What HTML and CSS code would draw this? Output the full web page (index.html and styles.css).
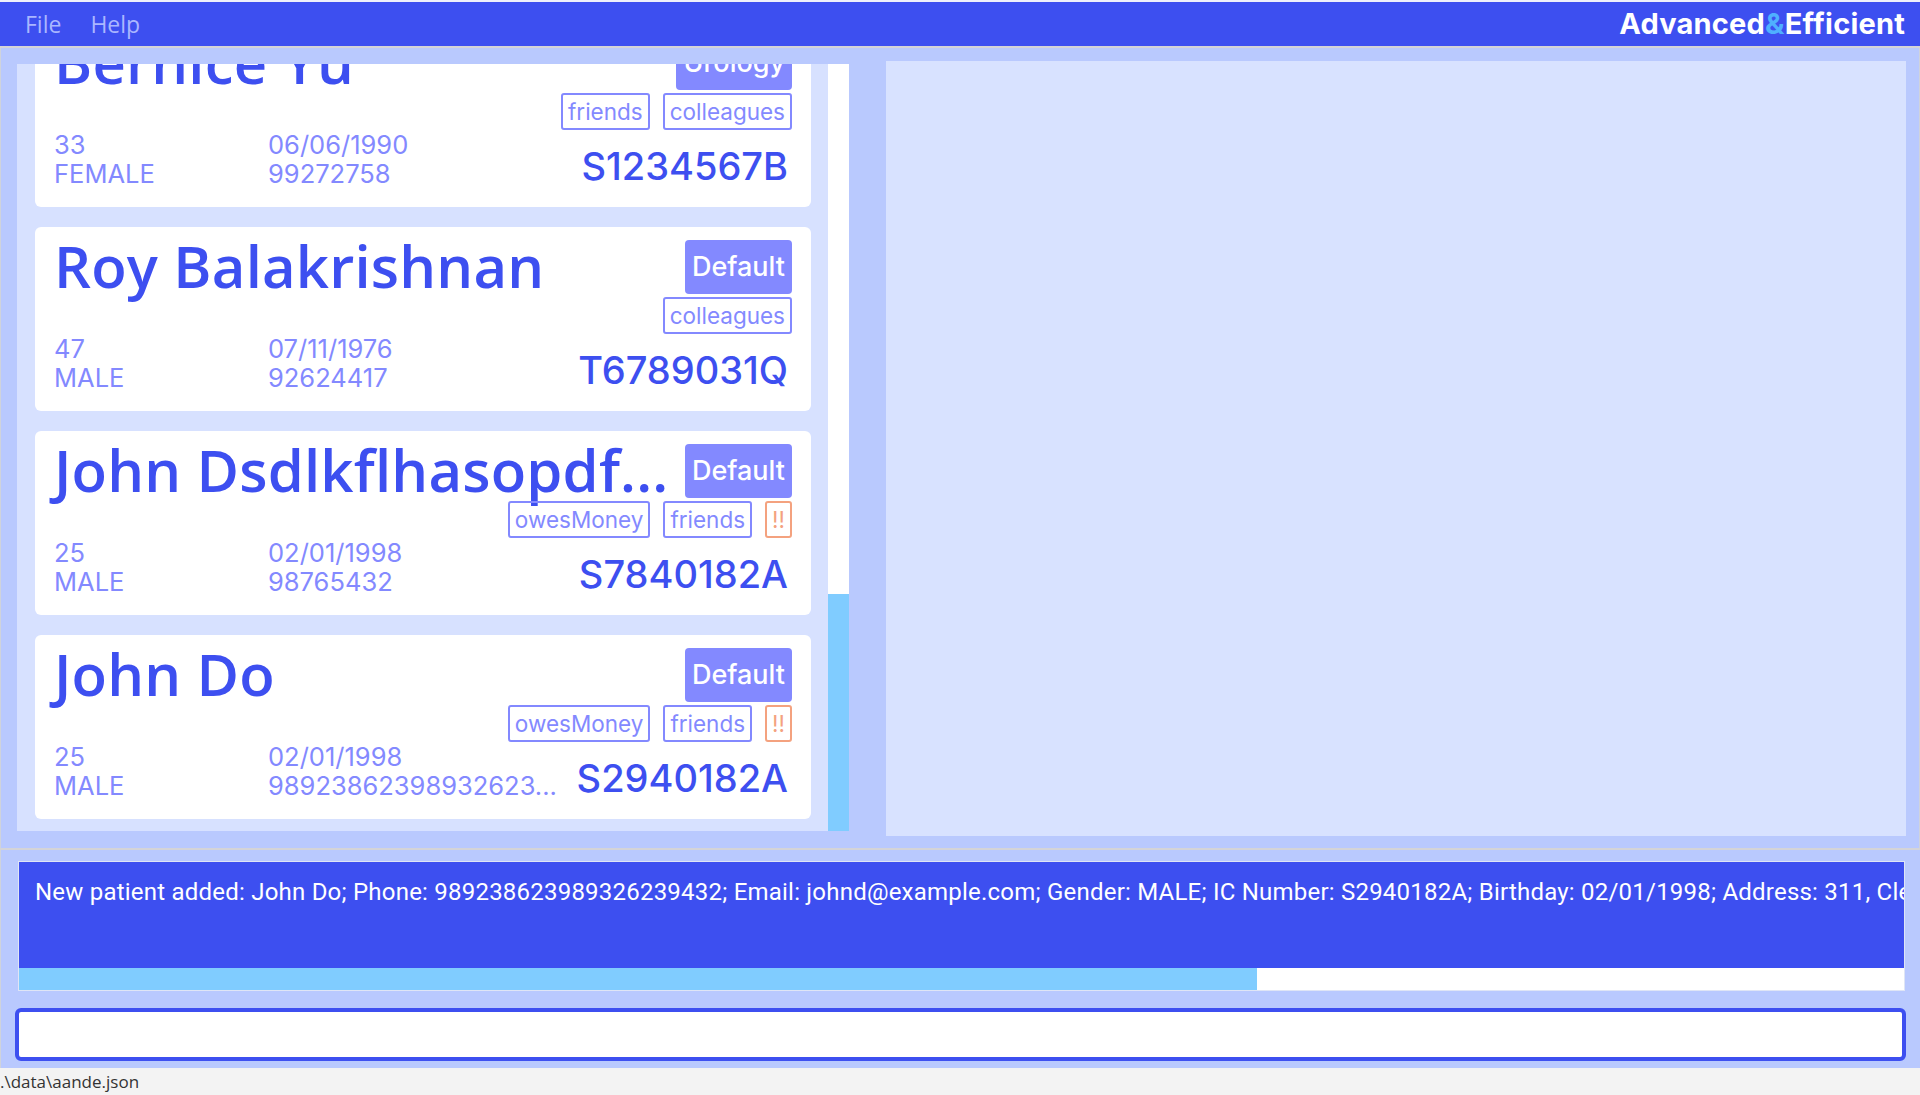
FILE: index.html
```html
<!DOCTYPE html>
<html lang="en">
<head>
<meta charset="utf-8">
<title>Advanced&amp;Efficient</title>
<link rel="stylesheet" href="styles.css">
</head>
<body>
<div class="app">
  <header class="menubar">
    <nav class="menu">
      <span class="menu-item">File</span>
      <span class="menu-item">Help</span>
    </nav>
    <div class="logo">Advanced<span class="amp">&amp;</span>Efficient</div>
  </header>

  <main class="main">
    <section class="list-panel">
      <div class="list-viewport">
        <div class="list-content">
          <div class="cell">
            <article class="card">
              <div class="card-head">
                <h2 class="name">Bernice Yu</h2>
                <span class="badge">Urology</span>
              </div>
              <div class="tags"><span class="tag">friends</span><span class="tag">colleagues</span></div>
              <div class="card-foot">
                <div class="col col-a"><div>33</div><div>FEMALE</div></div>
                <div class="col col-b"><div>06/06/1990</div><div>99272758</div></div>
                <div class="ic">S1234567B</div>
              </div>
            </article>
          </div>
          <div class="cell">
            <article class="card">
              <div class="card-head">
                <h2 class="name">Roy Balakrishnan</h2>
                <span class="badge">Default</span>
              </div>
              <div class="tags"><span class="tag">colleagues</span></div>
              <div class="card-foot">
                <div class="col col-a"><div>47</div><div>MALE</div></div>
                <div class="col col-b"><div>07/11/1976</div><div>92624417</div></div>
                <div class="ic">T6789031Q</div>
              </div>
            </article>
          </div>
          <div class="cell">
            <article class="card">
              <div class="card-head">
                <h2 class="name">John Dsdlkflhasopdf...</h2>
                <span class="badge">Default</span>
              </div>
              <div class="tags"><span class="tag">owesMoney</span><span class="tag">friends</span><span class="tag warn">!!</span></div>
              <div class="card-foot">
                <div class="col col-a"><div>25</div><div>MALE</div></div>
                <div class="col col-b"><div>02/01/1998</div><div>98765432</div></div>
                <div class="ic">S7840182A</div>
              </div>
            </article>
          </div>
          <div class="cell">
            <article class="card">
              <div class="card-head">
                <h2 class="name">John Do</h2>
                <span class="badge">Default</span>
              </div>
              <div class="tags"><span class="tag">owesMoney</span><span class="tag">friends</span><span class="tag warn">!!</span></div>
              <div class="card-foot">
                <div class="col col-a"><div>25</div><div>MALE</div></div>
                <div class="col col-b"><div>02/01/1998</div><div>98923862398932623...</div></div>
                <div class="ic">S2940182A</div>
              </div>
            </article>
          </div>
        </div>
      </div>
      <div class="scrollbar"><div class="thumb"></div></div>
    </section>
    <section class="detail-panel"></section>
  </main>

  <section class="bottom">
    <div class="result">
      <div class="result-text">New patient added: John Do; Phone: 989238623989326239432; Email: johnd@example.com; Gender: MALE; IC Number: S2940182A; Birthday: 02/01/1998; Address: 311, Clementi Ave 2, #02-25; Tags: [owesMoney][friends]</div>
    </div>
    <div class="progress"><div class="progress-fill" style="width:65.7%"></div></div>
    <div class="command"></div>
  </section>

  <footer class="status">.\data\aande.json</footer>
</div>
</body>
</html>
```

FILE: styles.css
```css
* { box-sizing: border-box; }

html, body {
  margin: 0;
  padding: 0;
  width: 1920px;
  height: 1095px;
  overflow: hidden;
  background: #f3f3f3;
  font-family: "Inter", "Noto Sans", sans-serif;
}

.app {
  display: flex;
  flex-direction: column;
  width: 1920px;
  height: 1095px;
}

/* ---------- menu bar ---------- */
.menubar {
  height: 48px;
  border-top: 2px solid #eef0fb;
  border-bottom: 2px solid #d4d4d8;
  background: #3d4ff0;
  display: flex;
  align-items: center;
  justify-content: space-between;
  padding: 0 15px 0 25px;
}

.menu {
  display: flex;
  gap: 29px;
}

.menu-item {
  font-family: "Open Sans", "Noto Sans", sans-serif;
  font-size: 23px;
  line-height: 30px;
  color: #aab6ff;
}

.logo {
  font-family: "Inter", sans-serif;
  font-weight: 700;
  font-size: 29px;
  line-height: 36px;
  letter-spacing: 0.2px;
  color: #ffffff;
}

.amp { color: #4fb0ff; }

/* ---------- main ---------- */
.main {
  height: 802px;
  display: flex;
  gap: 37px;
  background: #b9c9fe;
  border-left: 1px solid #cfd3dc;
  border-right: 1px solid #cfd3dc;
  border-bottom: 2px solid #d4d4d8;
  padding: 13px 13px 12px 16px;
}

.list-panel {
  width: 832px;
  margin: 3px 0 5px;
  display: flex;
}

.list-viewport {
  flex: 1;
  overflow: hidden;
  background: #d7e1ff;
  display: flex;
  flex-direction: column;
  justify-content: flex-end;
}

.list-content {
  padding-bottom: 2px;
}

.cell {
  padding: 10px 17px 10px 18px;
}

.card {
  height: 184px;
  background: #ffffff;
  border-radius: 6px;
  padding: 13px 19px 19px 19px;
  display: flex;
  flex-direction: column;
}

.card-head {
  display: flex;
  justify-content: space-between;
  align-items: flex-start;
  height: 54px;
  gap: 16px;
}

.name {
  margin: -1px 0 0;
  min-width: 0;
  font-family: "Open Sans", "Noto Sans", sans-serif;
  font-weight: 600;
  font-size: 58px;
  letter-spacing: 0.2px;
  line-height: 54px;
  color: #3d4ff0;
  white-space: nowrap;
}

.badge {
  flex: none;
  height: 54px;
  line-height: 54px;
  padding: 0 7px;
  border-radius: 4px;
  background: #8389ff;
  color: #ffffff;
  font-size: 27px;
  font-weight: 500;
}

.tags {
  margin-top: 3px;
  height: 37px;
  display: flex;
  justify-content: flex-end;
  gap: 13px;
}

.tag {
  height: 37px;
  line-height: 33px;
  padding: 0 5px;
  border: 2px solid #8389ff;
  border-radius: 3px;
  color: #8389ff;
  font-size: 22.5px;
}

.tag.warn {
  border-color: #f4a27f;
  color: #f4a27f;
}

.card-foot {
  flex: 1;
  display: flex;
  align-items: flex-end;
}

.col {
  font-size: 25.5px;
  line-height: 29px;
  color: #8389ff;
  white-space: nowrap;
}

.col-a { width: 214px; flex: none; }
.col-b { flex: 1; }

.ic {
  font-size: 38px;
  font-weight: 500;
  line-height: 38px;
  margin: 0 4px 3px 0;
  color: #3d4ff0;
}

.scrollbar {
  width: 21px;
  flex: none;
  background: #ffffff;
  display: flex;
  flex-direction: column;
  justify-content: flex-end;
}

.thumb {
  height: 237px;
  background: #80ccff;
}

.detail-panel {
  flex: 1;
  background: #d8e2ff;
}

/* ---------- bottom ---------- */
.bottom {
  flex: 1;
  background: #b9c9fe;
  border-left: 1px solid #cfd3dc;
  padding: 11px 15px 7px 17px;
  display: flex;
  flex-direction: column;
}

.result {
  height: 107px;
  background: #3d4ff0;
  border: 1px solid #dfe5f5;
  border-bottom: none;
  overflow: hidden;
  padding: 15px 0 0 16px;
}

.result-text {
  font-family: "Roboto", sans-serif;
  font-size: 24px;
  letter-spacing: 0.22px;
  line-height: 30px;
  color: #ffffff;
  white-space: nowrap;
}

.progress {
  height: 23px;
  background: #ffffff;
  border: 1px solid #dfe5f5;
  border-top: none;
}

.progress-fill {
  height: 100%;
  background: #80ccff;
}

.command {
  margin: 17px -1px 0 -3px;
  height: 53px;
  border: 4px solid #3d4ff0;
  border-radius: 6px;
  background: #ffffff;
}

/* ---------- status ---------- */
.status {
  height: 27px;
  background: #f3f3f3;
  font-family: "Open Sans", "Noto Sans", sans-serif;
  font-size: 17px;
  line-height: 27px;
  color: #333333;
}
```
